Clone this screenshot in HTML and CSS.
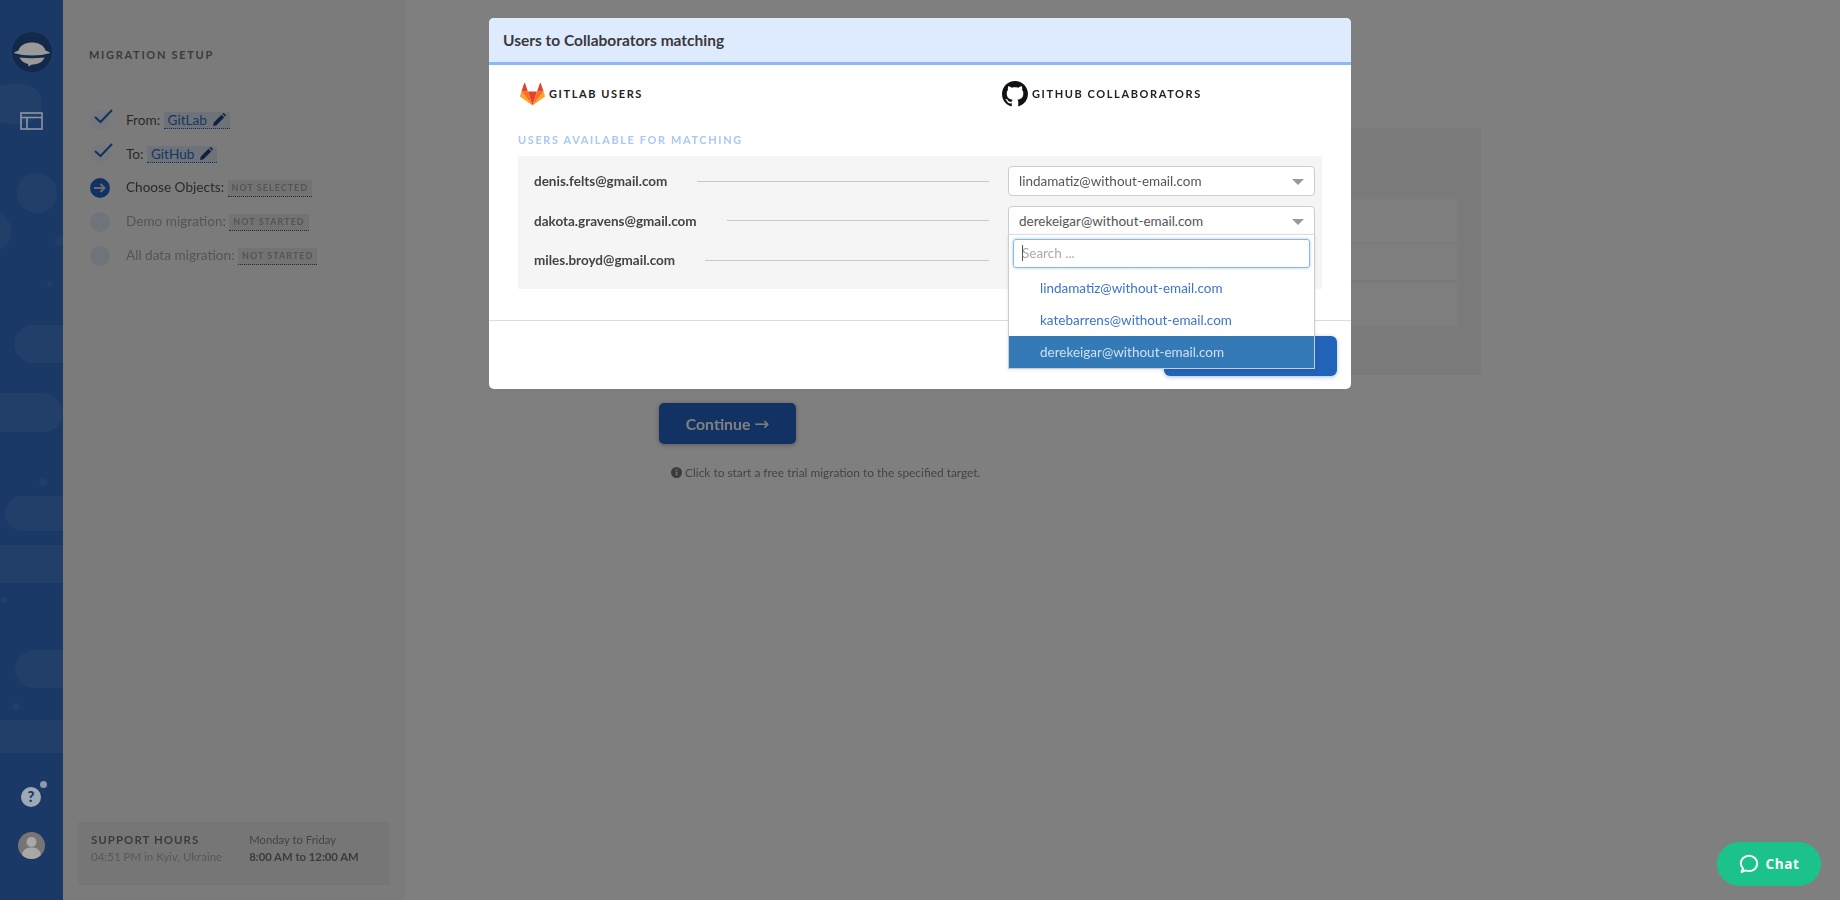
FILE: index.html
```html
<!DOCTYPE html>
<html lang="en">
  <head>
    <meta charset="UTF-8" />
    <meta name="viewport" content="width=device-width, initial-scale=1.0" />
    <title>Migration Setup</title>
    <link rel="stylesheet" href="styles.css">
  </head>
  <body>
    <div class="page">
      <aside class="rail">
        <span class="bubble b1"></span>
        <span class="bubble b2"></span>
        <span class="bubble b3"></span>
        <span class="bubble b4"></span>
        <span class="bubble b5"></span>
        <span class="bubble b6"></span>
        <span class="bubble b7"></span>
        <span class="bubble b8"></span>
        <span class="bubble b9"></span>
        <span class="bubble d1"></span>
        <span class="bubble d2"></span>
        <span class="bubble d3"></span>
        <span class="bubble d4"></span>
        <span class="bubble d5"></span>
        <div class="rail-top">
          <svg class="logo" width="40" height="40" viewBox="0 0 40 40">
            <circle cx="20" cy="20" r="20" fill="#14294a" />
            <path d="M1.5 21 Q4 19.3 6.5 18.5 C8 13 14 10.5 20 10.5 C26 10.5 32 13 33.5 18.5 Q36 19.3 38.5 21 Q30 23.5 20 23.5 Q10 23.5 1.5 21 Z" fill="#999" />
            <path d="M7.5 25.5 Q20 27 32.5 25.5 C31 30 26 32.5 20 32.5 L16.5 34.5 L16 32 C12 31 9 29 7.5 25.5 Z" fill="#999" />
          </svg>
          <svg class="rail-icon" width="23" height="18" viewBox="0 0 23 18" fill="none" stroke="#8e96a3" stroke-width="1.6">
            <rect x="1" y="1" width="21" height="16" />
            <path d="M1 5.5 H22 M7 5.5 V17" />
          </svg>
        </div>
        <div class="rail-bottom">
          <div class="help">
            <svg width="20" height="20" viewBox="0 0 20 20">
              <circle cx="10" cy="10" r="10" fill="#9ea9b8" />
              <text x="10" y="15" text-anchor="middle" class="help-mark">?</text>
            </svg>
            <span class="help-dot"></span>
          </div>
          <svg width="27" height="27" viewBox="0 0 27 27">
            <circle cx="13.5" cy="13.5" r="13.5" fill="#757575" />
            <circle cx="13.5" cy="10" r="5" fill="#a8a8a8" />
            <path d="M4 23 C5 17 9 15.5 13.5 15.5 C18 15.5 22 17 23 23 A13.5 13.5 0 0 1 4 23 Z" fill="#a8a8a8" />
          </svg>
        </div>
      </aside>

      <section class="setup">
        <div>
          <h2 class="setup-title">MIGRATION SETUP</h2>
          <ul class="steps">
            <li class="step">
              <span class="dot dot-done">
                <svg class="check" width="19" height="15" viewBox="0 0 19 15" fill="none" stroke="#2464c8" stroke-width="2"><path d="M1 8 L6.5 13 L18 1" /></svg>
              </span>
              <span>From: <span class="chip">GitLab <svg width="13" height="13" viewBox="0 0 13 13"><path d="M0 13 L0.8 9.5 L8.5 1.8 L11.2 4.5 L3.5 12.2 Z M9.4 1 L10.2 0.2 Q10.6 -0.1 11 0.2 L12.8 2 Q13.1 2.4 12.8 2.8 L12 3.6 Z" fill="#23437a" /></svg></span></span>
            </li>
            <li class="step">
              <span class="dot dot-done">
                <svg class="check" width="19" height="15" viewBox="0 0 19 15" fill="none" stroke="#2464c8" stroke-width="2"><path d="M1 8 L6.5 13 L18 1" /></svg>
              </span>
              <span>To: <span class="chip">GitHub <svg width="13" height="13" viewBox="0 0 13 13"><path d="M0 13 L0.8 9.5 L8.5 1.8 L11.2 4.5 L3.5 12.2 Z M9.4 1 L10.2 0.2 Q10.6 -0.1 11 0.2 L12.8 2 Q13.1 2.4 12.8 2.8 L12 3.6 Z" fill="#23437a" /></svg></span></span>
            </li>
            <li class="step">
              <span class="dot dot-now">
                <svg width="12" height="10" viewBox="0 0 12 10" fill="none" stroke="#d8d8d8" stroke-width="2"><path d="M0 5 H10 M6.5 1 L10.5 5 L6.5 9" /></svg>
              </span>
              <span>Choose Objects: <span class="tag">NOT SELECTED</span></span>
            </li>
            <li class="step step-off">
              <span class="dot"></span>
              <span>Demo migration: <span class="tag">NOT STARTED</span></span>
            </li>
            <li class="step step-off">
              <span class="dot"></span>
              <span>All data migration: <span class="tag">NOT STARTED</span></span>
            </li>
          </ul>
        </div>
        <div class="support">
          <div>
            <div class="support-title">SUPPORT HOURS</div>
            <div class="support-local">04:51 PM in Kyiv, Ukraine</div>
          </div>
          <div>
            <div class="support-days">Monday to Friday</div>
            <div class="support-time">8:00 AM to 12:00 AM</div>
          </div>
        </div>
      </section>

      <main class="main">
        <div class="card">
          <div class="card-row card-row-a"></div>
          <div class="card-row card-row-b"></div>
          <div class="card-row card-row-a"></div>
        </div>
        <button class="continue">Continue <span class="arrow">→</span></button>
        <p class="hint">
          <svg width="11" height="11" viewBox="0 0 11 11"><circle cx="5.5" cy="5.5" r="5.5" fill="#777" /><rect x="4.6" y="4.6" width="1.8" height="4" fill="#ddd" /><rect x="4.6" y="2.2" width="1.8" height="1.6" fill="#ddd" /></svg>
          Click to start a free trial migration to the specified target.
        </p>
      </main>
    </div>

    <div class="overlay">
      <div class="modal">
        <div class="modal-head">Users to Collaborators matching</div>
        <div class="modal-body">
          <div class="columns">
            <div class="col-title col-gitlab">
              <svg width="25" height="24" viewBox="0 0 24 24" preserveAspectRatio="none">
                <path d="M12 23.5 L16.4 9.6 H7.6 Z" fill="#e24329" />
                <path d="M12 23.5 L7.6 9.6 H1.4 Z" fill="#fc6d26" />
                <path d="M1.4 9.6 L0.1 13.8 Q-0.1 14.6 0.6 15.1 L12 23.5 Z" fill="#fca326" />
                <path d="M1.4 9.6 H7.6 L4.9 1.3 Q4.5 0.5 4 1.3 Z" fill="#e24329" />
                <path d="M12 23.5 L16.4 9.6 H22.6 Z" fill="#fc6d26" />
                <path d="M22.6 9.6 L23.9 13.8 Q24.1 14.6 23.4 15.1 L12 23.5 Z" fill="#fca326" />
                <path d="M22.6 9.6 H16.4 L19.1 1.3 Q19.5 0.5 20 1.3 Z" fill="#e24329" />
              </svg>
              GITLAB USERS
            </div>
            <div class="col-title col-github">
              <svg width="26" height="26" viewBox="0 0 16 16">
                <path fill="#111" d="M8 0C3.58 0 0 3.58 0 8c0 3.54 2.29 6.53 5.47 7.59.4.07.55-.17.55-.38 0-.19-.01-.82-.01-1.49-2.01.37-2.53-.49-2.69-.94-.09-.23-.48-.94-.82-1.13-.28-.15-.68-.52-.01-.53.63-.01 1.08.58 1.23.82.72 1.21 1.87.87 2.33.66.07-.52.28-.87.51-1.07-1.78-.2-3.64-.89-3.64-3.95 0-.87.31-1.59.82-2.15-.08-.2-.36-1.02.08-2.12 0 0 .67-.21 2.2.82.64-.18 1.32-.27 2-.27s1.36.09 2 .27c1.53-1.04 2.2-.82 2.2-.82.44 1.1.16 1.92.08 2.12.51.56.82 1.27.82 2.15 0 3.07-1.87 3.75-3.65 3.95.29.25.54.73.54 1.48 0 1.07-.01 1.93-.01 2.2 0 .21.15.46.55.38A8.01 8.01 0 0 0 16 8c0-4.42-3.58-8-8-8z" />
              </svg>
              GITHUB COLLABORATORS
            </div>
          </div>
          <div class="section-label">USERS AVAILABLE FOR MATCHING</div>
          <div class="match-box">
            <div class="match-row">
              <span class="match-email">denis.felts@gmail.com</span>
              <span class="match-line"></span>
              <div class="select">lindamatiz@without-email.com<span class="caret"></span></div>
            </div>
            <div class="match-row">
              <span class="match-email">dakota.gravens@gmail.com</span>
              <span class="match-line"></span>
              <div class="select-wrap">
                <div class="select select-open">derekeigar@without-email.com<span class="caret"></span></div>
                <div class="dropdown">
                  <div class="search"><span class="search-cursor"></span>Search ...</div>
                  <div class="option">lindamatiz@without-email.com</div>
                  <div class="option">katebarrens@without-email.com</div>
                  <div class="option option-active">derekeigar@without-email.com</div>
                </div>
              </div>
            </div>
            <div class="match-row">
              <span class="match-email">miles.broyd@gmail.com</span>
              <span class="match-line"></span>
              <div class="select-spacer"></div>
            </div>
          </div>
        </div>
        <div class="modal-foot">
          <button class="save" aria-label="Save"></button>
        </div>
      </div>
    </div>

    <button class="chat">
      <svg width="20" height="20" viewBox="0 0 20 20" fill="none" stroke="#fff" stroke-width="2"><path d="M2.5 18 L4 14.5 C2.6 13 1.8 11.4 1.8 9.6 C1.8 5.3 5.4 1.8 10 1.8 C14.6 1.8 18.2 5.3 18.2 9.6 C18.2 13.9 14.6 17 10 17 C8.8 17 7.6 16.8 6.6 16.4 Z" stroke-linejoin="round" /></svg>
      Chat
    </button>
  </body>
</html>
```

FILE: styles.css
```css
* {
  margin: 0;
  padding: 0;
  box-sizing: border-box;
}

html,
body {
  height: 100%;
  overflow: hidden;
  font-family: Lato, "Noto Sans", sans-serif;
  background: white;
}

.page {
  display: flex;
  height: 900px;
  filter: blur(0.4px);
}

/* left rail, stays out of the dim layer so colours are the final ones */
.rail {
  position: relative;
  width: 63px;
  background: #1b3966;
  overflow: hidden;
  display: flex;
  flex-direction: column;
  justify-content: space-between;
  align-items: center;
  padding: 32px 0 41px;
  flex-shrink: 0;
}

.rail-top,
.rail-bottom {
  position: relative;
  display: flex;
  flex-direction: column;
  align-items: center;
}

.logo {
  margin-right: 17px;
  margin-left: 0;
}

.rail-top {
  margin-left: 17px;
}

.rail-icon {
  margin-top: 40px;
  margin-right: 17px;
}

.rail-bottom {
  gap: 25px;
}

.help {
  position: relative;
  width: 20px;
  height: 20px;
  margin-left: -2px;
}

.help-mark {
  font: 900 15px Lato, sans-serif;
  fill: #1b3966;
}

.help-dot {
  position: absolute;
  top: -6px;
  right: -6px;
  width: 7px;
  height: 7px;
  border-radius: 50%;
  background: #8e99a8;
}

.bubble {
  position: absolute;
  background: rgba(255, 255, 255, 0.03);
  border-radius: 20px;
}

.b1 { left: -12px; top: 84px; width: 54px; height: 40px; }
.b2 { left: 17px; top: 173px; width: 40px; height: 40px; border-radius: 50%; }
.b3 { left: -17px; top: 213px; width: 28px; height: 37px; border-radius: 50%; }
.b4 { left: 14px; top: 325px; width: 70px; height: 38px; }
.b5 { left: -20px; top: 393px; width: 83px; height: 39px; }
.b6 { left: 5px; top: 496px; width: 80px; height: 35px; }
.b7 { left: -20px; top: 545px; width: 83px; height: 38px; border-radius: 0; }
.b8 { left: 15px; top: 650px; width: 70px; height: 38px; }
.b9 { left: -20px; top: 720px; width: 83px; height: 33px; border-radius: 0; }
.d1 { left: 55px; top: 236px; width: 10px; height: 10px; }
.d2 { left: 47px; top: 281px; width: 6px; height: 6px; }
.d3 { left: 39px; top: 478px; width: 8px; height: 8px; }
.d4 { left: 1px; top: 597px; width: 6px; height: 6px; }
.d5 { left: 12px; top: 703px; width: 8px; height: 8px; }

/* setup panel */
.setup {
  width: 342px;
  background: #f7f7f7;
  padding: 48px 15px 15px;
  display: flex;
  flex-direction: column;
  justify-content: space-between;
  flex-shrink: 0;
}

.setup-title {
  font-size: 11px;
  font-weight: 700;
  letter-spacing: 1.7px;
  line-height: 13px;
  color: #777;
  padding-left: 11px;
}

.steps {
  list-style: none;
  margin-top: 42px;
  padding-left: 12px;
}

.step {
  display: flex;
  align-items: center;
  height: 34px;
  font-size: 13.6px;
  color: #555;
}

.step-off {
  color: #aaa;
}

.dot {
  position: relative;
  width: 20px;
  height: 20px;
  border-radius: 50%;
  background: #dfe8f5;
  margin-right: 16px;
  display: flex;
  align-items: center;
  justify-content: center;
  flex-shrink: 0;
}

.dot-done {
  background: #edf1f7;
}

.check {
  position: absolute;
  left: 4px;
  top: -1px;
}

.dot-now {
  background: #2464c8;
}

.chip {
  display: inline-flex;
  align-items: center;
  gap: 6px;
  height: 17px;
  padding: 0 4px;
  background: #dce6f5;
  border-bottom: 1px dotted #2464c8;
  color: #2f6fc4;
}

.tag {
  display: inline-flex;
  align-items: center;
  height: 17px;
  padding: 0 4px;
  background: #e6e6e6;
  border-bottom: 1px dotted #555;
  font-size: 9px;
  font-weight: 700;
  letter-spacing: 1px;
  color: #aaa;
  vertical-align: 1px;
}

.support {
  display: flex;
  gap: 27px;
  height: 63px;
  padding: 9px 13px;
  background: #ececec;
  font-size: 11.5px;
  line-height: 17px;
}

.support-title {
  font-weight: 700;
  letter-spacing: 1px;
  color: #777;
}

.support-local {
  color: #b0b0b0;
}

.support-days {
  font-size: 11.3px;
  color: #888;
}

.support-time {
  font-size: 11.3px;
  font-weight: 700;
  color: #777;
}

/* main content behind the dialog */
.main {
  flex: 1;
  padding: 128px 0 0 254px;
}

.card {
  width: 822px;
  height: 247px;
  padding: 71px 24px 0 0;
  background: #f4f4f4;
  display: flex;
  flex-direction: column;
  gap: 3px;
}

.card-row {
  background: #fdfdfd;
}

.card-row-a {
  height: 43px;
}

.card-row-b {
  height: 35px;
}

.continue {
  display: block;
  width: 137px;
  height: 41px;
  margin-top: 28px;
  border: 0;
  border-radius: 5px;
  background: #2464c8;
  color: #fff;
  font: 700 15.8px Lato, sans-serif;
  box-shadow: 0 1px 5px rgba(0, 0, 0, 0.3);
}

.arrow {
  font-family: "DejaVu Sans", sans-serif;
  font-size: 18px;
  font-weight: 400;
  line-height: 0;
}

.hint {
  margin-top: 21px;
  padding-left: 12px;
  font-size: 11.9px;
  line-height: 16px;
  color: #888;
}

.hint svg {
  vertical-align: -1px;
}

/* dialog */
.overlay {
  position: fixed;
  inset: 0 0 0 63px;
  background: rgba(0, 0, 0, 0.5);
  padding: 18px 0 0 426px;
}

.modal {
  width: 862px;
  height: 371px;
  background: white;
  border-radius: 5px;
  display: flex;
  flex-direction: column;
  filter: blur(0.3px);
}

.modal-head {
  height: 47px;
  padding: 0 14px;
  background: #deebff;
  border-bottom: 3px solid #8cb8f7;
  border-radius: 5px 5px 0 0;
  font-size: 15.5px;
  font-weight: 700;
  line-height: 44px;
  color: #3a3a3a;
}

.modal-body {
  flex: 1;
  padding: 15px 29px 0 29px;
  border-bottom: 1px solid #dcdcdc;
}

.columns {
  display: flex;
  height: 27px;
}

.col-title {
  display: flex;
  align-items: center;
  gap: 4px;
  font-size: 11px;
  font-weight: 700;
  letter-spacing: 1.6px;
  color: #222;
}

.col-gitlab {
  width: 484px;
  padding-left: 2px;
}

.section-label {
  margin-top: 26px;
  font-size: 11px;
  font-weight: 700;
  letter-spacing: 1.6px;
  line-height: 13px;
  color: #a9c8f5;
}

.match-box {
  margin-top: 10px;
  height: 133px;
  padding: 10px 7px 0 16px;
  background: #f5f5f5;
}

.match-row {
  display: flex;
  align-items: center;
  height: 30px;
  margin-bottom: 9.5px;
}

.match-email {
  font-size: 13.5px;
  font-weight: 700;
  color: #444;
  margin-right: 30px;
}

.match-line {
  flex: 1;
  height: 1px;
  background: #c8c8c8;
  margin-right: 19px;
}

.select-wrap {
  position: relative;
}

.select,
.select-spacer {
  width: 307px;
  height: 30px;
}

.select {
  position: relative;
  padding-left: 10px;
  background: white;
  border: 1px solid #ccc;
  border-radius: 4px;
  font-size: 13.5px;
  line-height: 28px;
  color: #555;
}

.select-open {
  border-radius: 4px 4px 0 0;
}

.caret {
  position: absolute;
  right: 10px;
  top: 12px;
  border-top: 6px solid #999;
  border-left: 6px solid transparent;
  border-right: 6px solid transparent;
}

.dropdown {
  position: absolute;
  left: 0;
  top: 28px;
  width: 307px;
  padding-top: 4px;
  background: white;
  border: 1px solid #ccc;
  border-top-color: #ddd;
  box-shadow: 0 1px 3px rgba(0, 0, 0, 0.1);
}

.search {
  position: relative;
  width: 297px;
  height: 29px;
  margin: 0 0 4px 4px;
  padding-left: 8px;
  border: 1px solid #8ab4ec;
  border-radius: 3px;
  box-shadow: 0 0 3px rgba(102, 160, 235, 0.6);
  font-size: 13.5px;
  line-height: 27px;
  color: #aaa;
}

.search-cursor {
  position: absolute;
  left: 8px;
  top: 5px;
  width: 1px;
  height: 16px;
  background: #555;
}

.option {
  height: 32px;
  padding-left: 31px;
  font-size: 13.5px;
  line-height: 32px;
  color: #3d74c9;
}

.option-active {
  background: #337ab7;
  color: #cfe0f2;
}

.modal-foot {
  height: 68px;
  padding: 15px 14px 0 0;
  display: flex;
  justify-content: flex-end;
  align-items: flex-start;
}

.save {
  width: 173px;
  height: 40px;
  border: 0;
  border-radius: 6px;
  background: #2263ba;
  box-shadow: 0 1px 4px rgba(34, 99, 186, 0.4);
}

/* chat launcher */
.chat {
  position: fixed;
  right: 19px;
  bottom: 14px;
  width: 104px;
  height: 44px;
  border: 0;
  border-radius: 22px;
  background: #1bc28b;
  color: white;
  font: 700 13.5px "Open Sans", sans-serif;
  letter-spacing: 0.6px;
  display: flex;
  align-items: center;
  justify-content: center;
  gap: 7px;
}
```
